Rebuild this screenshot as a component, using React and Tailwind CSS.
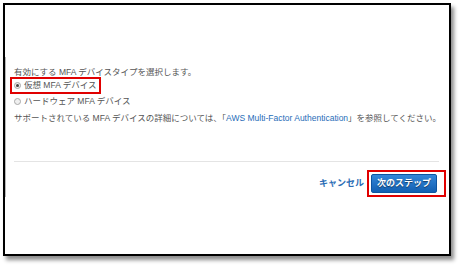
import React from "react";

const Radio = ({ checked }) => (
  <span className="inline-flex items-center justify-center w-[7px] h-[7px] rounded-full border border-[#a9a9a9] bg-[#f0f0f0] mr-[3px] shrink-0">
    {checked && <span className="w-[3px] h-[3px] rounded-full bg-[#444]" />}
  </span>
);

export default function App() {
  return (
    <div className="w-[460px] h-[265px] bg-white overflow-hidden" style={{ fontFamily: '"Liberation Sans", "Noto Sans CJK JP", sans-serif' }}>
      <div className="ml-[3px] mt-[3px] w-[448px] h-[253px] border-2 border-black bg-white shadow-[3px_4px_4px_rgba(0,0,0,0.45)]">
        <div className="mt-[52px] h-[140px] border-l border-[#b8b8b8] pl-[8px] pr-[8px] text-[8.5px] text-[#555]">
          <div className="pt-[8px] h-[22px] leading-[14px]">
            有効にする MFA デバイスタイプを選択します。
          </div>
          <div className="-mt-[2px] -ml-[4px] w-[91px] h-[17px] border-2 border-[#e00000] flex items-center pl-[2px]">
            <Radio checked />
            <span>仮想 MFA デバイス</span>
          </div>
          <div className="h-[14px] flex items-center">
            <Radio />
            <span>ハードウェア MFA デバイス</span>
          </div>
          <div className="mt-[3px] h-[14px] leading-[14px] whitespace-nowrap">
            サポートされている MFA デバイスの詳細については、「<span className="text-[#1f6db8]">AWS Multi-Factor Authentication</span>」を参照してください。
          </div>
          <div className="mt-[36px] h-[1px] bg-[#e4e4e4] mr-[2px]" />
          <div className="mt-[8px] flex items-center justify-end">
            <span className="text-[#2a6db5] font-bold text-[9px] mr-[3px]">キャンセル</span>
            <div className="-mr-[5px] border-2 border-[#e00000] pl-[2px] pr-[7px] py-[2px]">
              <div className="w-[66px] h-[19px] rounded-[2px] border border-[#0e55a0] bg-gradient-to-b from-[#3387d9] to-[#1260b2] flex items-center justify-center text-white font-bold text-[9px] [text-shadow:0_1px_1px_rgba(0,0,0,0.5)]">
                次のステップ
              </div>
            </div>
          </div>
        </div>
      </div>
    </div>
  );
}
